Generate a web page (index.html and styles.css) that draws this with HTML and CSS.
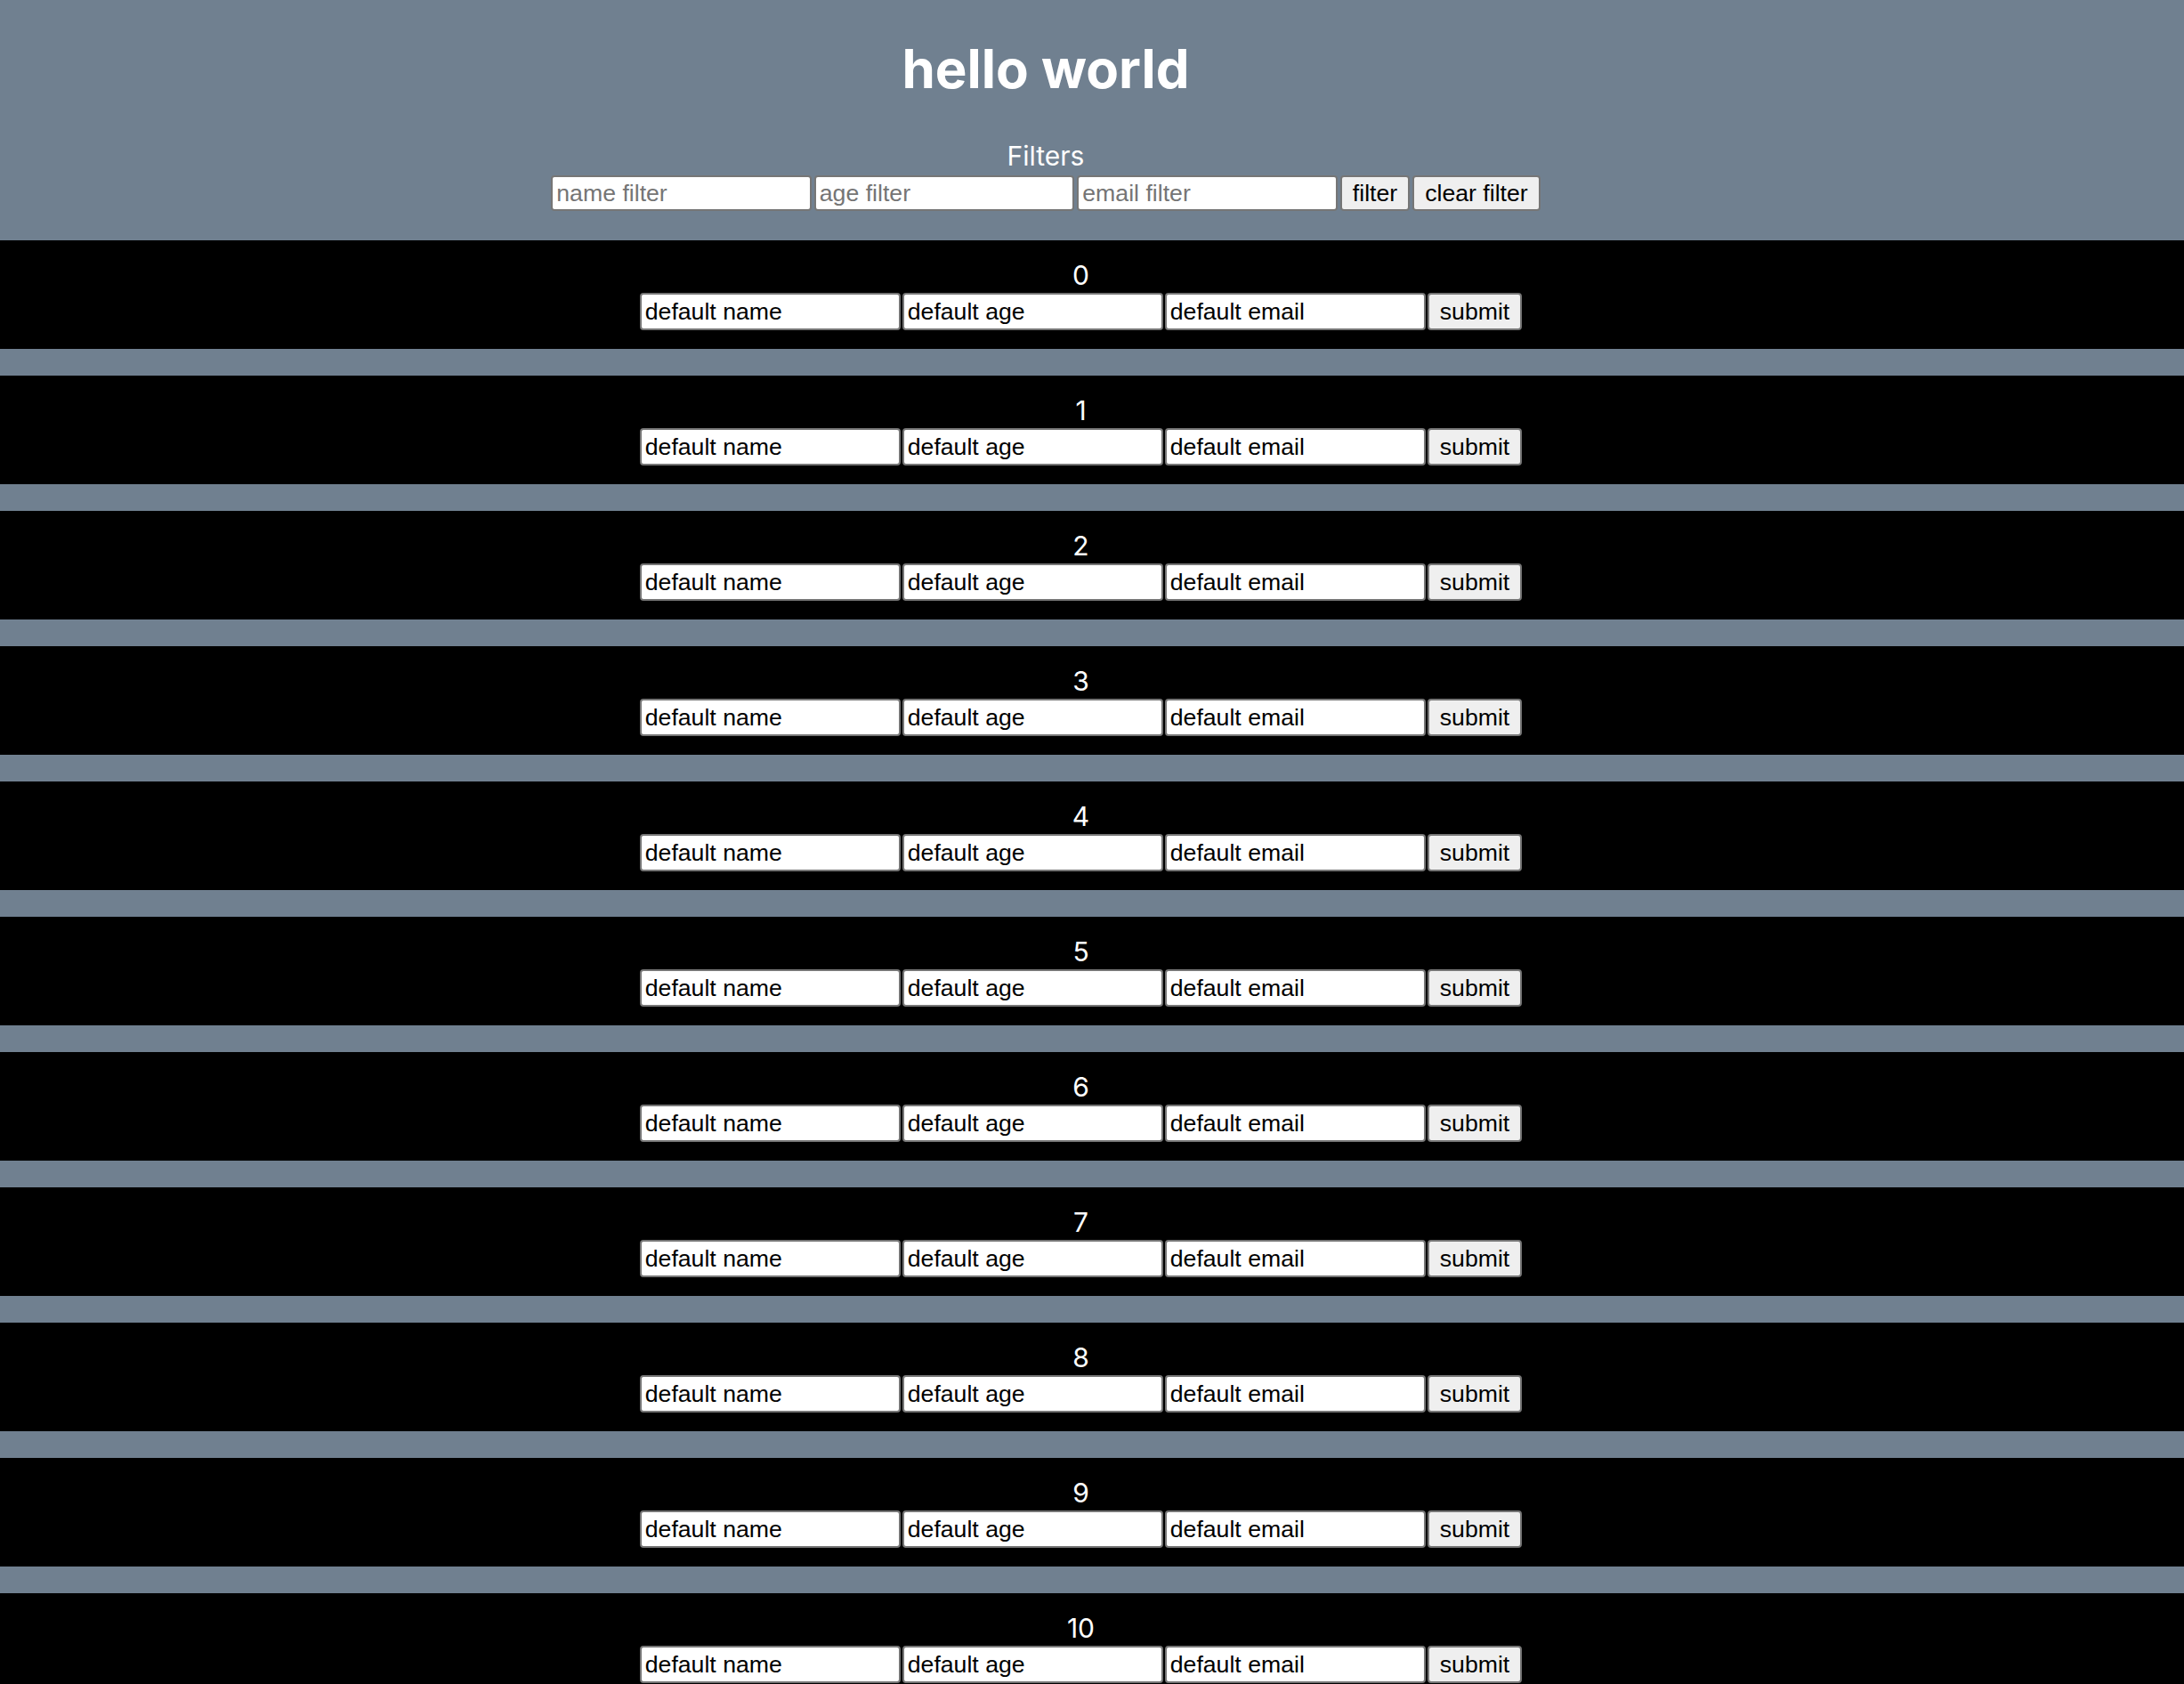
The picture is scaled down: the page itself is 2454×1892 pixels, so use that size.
FILE: index.html
```html
<!DOCTYPE html>
<html lang="en">
<head>
<meta charset="utf-8">
<title>hello world</title>
<link rel="stylesheet" href="styles.css">
</head>
<body>
<header class="header">
  <h1 class="title">hello world</h1>
  <div class="filters-label">Filters</div>
  <div class="filter-bar">
    <input class="field field-filter" type="text" placeholder="name filter">
    <input class="field field-filter" type="text" placeholder="age filter">
    <input class="field field-filter" type="text" placeholder="email filter">
    <button class="btn btn-filter" type="button">filter</button>
    <button class="btn btn-filter" type="button">clear filter</button>
  </div>
</header>
<main class="list">
  <section class="row"><div class="row-index">0</div><div class="row-form"><input class="field" type="text" value="default name"><input class="field" type="text" value="default age"><input class="field" type="text" value="default email"><button class="btn" type="button">submit</button></div></section>
  <section class="row"><div class="row-index">1</div><div class="row-form"><input class="field" type="text" value="default name"><input class="field" type="text" value="default age"><input class="field" type="text" value="default email"><button class="btn" type="button">submit</button></div></section>
  <section class="row"><div class="row-index">2</div><div class="row-form"><input class="field" type="text" value="default name"><input class="field" type="text" value="default age"><input class="field" type="text" value="default email"><button class="btn" type="button">submit</button></div></section>
  <section class="row"><div class="row-index">3</div><div class="row-form"><input class="field" type="text" value="default name"><input class="field" type="text" value="default age"><input class="field" type="text" value="default email"><button class="btn" type="button">submit</button></div></section>
  <section class="row"><div class="row-index">4</div><div class="row-form"><input class="field" type="text" value="default name"><input class="field" type="text" value="default age"><input class="field" type="text" value="default email"><button class="btn" type="button">submit</button></div></section>
  <section class="row"><div class="row-index">5</div><div class="row-form"><input class="field" type="text" value="default name"><input class="field" type="text" value="default age"><input class="field" type="text" value="default email"><button class="btn" type="button">submit</button></div></section>
  <section class="row"><div class="row-index">6</div><div class="row-form"><input class="field" type="text" value="default name"><input class="field" type="text" value="default age"><input class="field" type="text" value="default email"><button class="btn" type="button">submit</button></div></section>
  <section class="row"><div class="row-index">7</div><div class="row-form"><input class="field" type="text" value="default name"><input class="field" type="text" value="default age"><input class="field" type="text" value="default email"><button class="btn" type="button">submit</button></div></section>
  <section class="row"><div class="row-index">8</div><div class="row-form"><input class="field" type="text" value="default name"><input class="field" type="text" value="default age"><input class="field" type="text" value="default email"><button class="btn" type="button">submit</button></div></section>
  <section class="row"><div class="row-index">9</div><div class="row-form"><input class="field" type="text" value="default name"><input class="field" type="text" value="default age"><input class="field" type="text" value="default email"><button class="btn" type="button">submit</button></div></section>
  <section class="row"><div class="row-index">10</div><div class="row-form"><input class="field" type="text" value="default name"><input class="field" type="text" value="default age"><input class="field" type="text" value="default email"><button class="btn" type="button">submit</button></div></section>
</main>
</body>
</html>
```
FILE: styles.css
```css
html, body {
  margin: 0;
  padding: 0;
}

body {
  background: #708090;
  font-family: Inter, "Noto Sans", sans-serif;
  color: #ffffff;
}

.header {
  display: flex;
  flex-direction: column;
  align-items: center;
  padding: 0 104px 33px 0;
}

.title {
  margin: 41px 0 40px;
  font-size: 60px;
  line-height: 72px;
  font-weight: 700;
  color: #ffffff;
}

.filters-label {
  font-size: 30px;
  line-height: 44px;
  font-weight: 400;
}

.filter-bar {
  display: flex;
  gap: 3px;
}

.list {
  display: flex;
  flex-direction: column;
  gap: 30px;
}

.row {
  background: #000000;
  display: flex;
  flex-direction: column;
  align-items: center;
  padding: 20px 25px 21px 0;
}

.row-index {
  font-size: 30px;
  line-height: 39px;
  color: #ffffff;
}

.row-form {
  display: flex;
  gap: 2px;
}

.field {
  box-sizing: border-box;
  width: 293px;
  height: 42px;
  margin: 0;
  padding: 2px 4px;
  border: 2px solid #767676;
  border-radius: 4px;
  background: #ffffff;
  color: #000000;
  font-family: "Liberation Sans", Arial, sans-serif;
  font-size: 26.67px;
  outline: none;
}

.field::placeholder {
  color: #757575;
}

.field-filter {
  width: 292.5px;
  height: 40px;
}

.btn {
  box-sizing: border-box;
  height: 42px;
  margin: 0;
  padding: 2px 12px;
  border: 2px solid #767676;
  border-radius: 4px;
  background: #efefef;
  color: #000000;
  font-family: "Liberation Sans", Arial, sans-serif;
  font-size: 26.67px;
}

.btn-filter {
  height: 40px;
}
```
